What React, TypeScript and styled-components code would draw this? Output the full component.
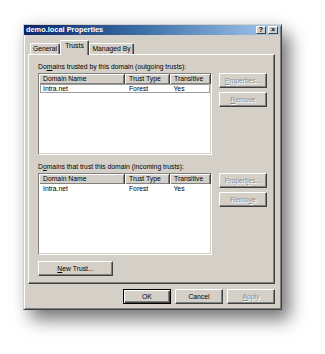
import React from "react";
import styled, { createGlobalStyle } from "styled-components";

const GlobalStyle = createGlobalStyle`
  html, body { margin: 0; padding: 0; background: #ffffff; }
  body { font-family: "Liberation Sans", Arial, sans-serif; font-size: 6.8px; color: #000; }
`;

const Page = styled.div`
  width: 325px;
  height: 354px;
  box-sizing: border-box;
  padding: 24px 0 0 23px;
  overflow: hidden;
`;

const Dialog = styled.div`
  width: 259px;
  height: 286px;
  box-sizing: border-box;
  background: #d4d0c8;
  border: 1px solid;
  border-color: #d4d0c8 #404040 #404040 #d4d0c8;
  box-shadow: inset 1px 1px #ffffff, inset -1px -1px #808080,
    8px 10px 16px rgba(0, 0, 0, 0.5), 0 0 14px rgba(0, 0, 0, 0.08);
  padding: 0 1px 0 0;
  display: flex;
  flex-direction: column;
`;

const TitleBar = styled.div`
  height: 10px;
  display: flex;
  align-items: center;
  padding: 0 2px 0 2px;
  background: linear-gradient(to right, #0a246a 0%, #3a6ea5 45%, #a6caf0 100%);
`;

const Title = styled.div`
  flex: 1;
  color: #ffffff;
  font-weight: bold;
  font-size: 7.4px;
  line-height: 10px;
  white-space: nowrap;
`;

const CaptionButton = styled.div`
  width: 10px;
  height: 8px;
  box-sizing: border-box;
  margin-left: 2px;
  background: #d4d0c8;
  border: 1px solid;
  border-color: #ffffff #404040 #404040 #ffffff;
  display: flex;
  align-items: center;
  justify-content: center;
  font-weight: bold;
  font-size: 7px;
  line-height: 6px;
  color: #000;
`;

const TabStrip = styled.div`
  margin-top: 5px;
  height: 14px;
  display: flex;
  align-items: flex-end;
  padding-left: 6px;
  position: relative;
  z-index: 1;
`;

const Tab = styled.div<{ $active?: boolean; $w: number }>`
  width: ${(p) => p.$w}px;
  height: ${(p) => (p.$active ? 15 : 11)}px;
  margin-bottom: ${(p) => (p.$active ? -1 : 0)}px;
  box-sizing: border-box;
  background: #d4d0c8;
  border-top: 1px solid #ffffff;
  border-left: 1px solid #ffffff;
  border-right: 1px solid #404040;
  box-shadow: inset -1px 0 #808080;
  border-radius: 2px 2px 0 0;
  display: flex;
  justify-content: center;
  padding-top: 1px;
  line-height: 8px;
  white-space: nowrap;
`;

const Panel = styled.div`
  margin: 0 5px 0 4px;
  height: 230px;
  box-sizing: border-box;
  border: 1px solid;
  border-color: #ffffff #404040 #404040 #ffffff;
  box-shadow: inset -1px -1px #808080;
  padding: 7px 0 0 9px;
  display: flex;
  flex-direction: column;
`;

const Label = styled.div<{ $gap?: number }>`
  height: 10px;
  line-height: 10px;
  margin-top: ${(p) => p.$gap ?? 0}px;
  margin-bottom: 1px;
  white-space: nowrap;
`;

const Key = styled.span`
  text-decoration: underline;
  text-underline-offset: 1px;
`;

const ListRow = styled.div`
  display: flex;
  gap: 7px;
  align-items: flex-start;
`;

const ListView = styled.div`
  width: 174px;
  height: 82px;
  box-sizing: border-box;
  background: #ffffff;
  border: 1px solid;
  border-color: #808080 #ffffff #ffffff #808080;
  box-shadow: inset -1px -1px #d4d0c8;
  display: flex;
  flex-direction: column;
`;

const HeaderRow = styled.div`
  display: flex;
  height: 10px;
`;

const HeaderCell = styled.div<{ $w: number }>`
  width: ${(p) => p.$w}px;
  box-sizing: border-box;
  background: #d4d0c8;
  border-right: 1px solid #404040;
  box-shadow: inset 1px 1px #ffffff, inset -1px -1px #808080;
  padding-left: 4px;
  line-height: 10px;
  white-space: nowrap;
  overflow: hidden;
`;

const DataRow = styled.div<{ $focused?: boolean }>`
  display: flex;
  height: 9px;
  box-sizing: border-box;
  margin: 0 1px;
  border: 1px solid ${(p) => (p.$focused ? "#9c9c9c" : "transparent")};
`;

const Cell = styled.div<{ $w: number; $pad: number }>`
  width: ${(p) => p.$w}px;
  box-sizing: border-box;
  padding-left: ${(p) => p.$pad}px;
  line-height: 7px;
  white-space: nowrap;
`;

const ButtonColumn = styled.div`
  display: flex;
  flex-direction: column;
  gap: 4px;
`;

const Button = styled.div<{ $disabled?: boolean; $default?: boolean }>`
  width: 48px;
  height: 15px;
  box-sizing: border-box;
  background: #d4d0c8;
  border: 1px solid;
  border-color: ${(p) =>
    p.$default ? "#000000" : "#ffffff #404040 #404040 #ffffff"};
  box-shadow: ${(p) =>
    p.$default
      ? "inset 1px 1px #ffffff, inset -1px -1px #404040, inset -2px -2px #808080"
      : "inset -1px -1px #808080"};
  display: flex;
  align-items: center;
  justify-content: center;
  line-height: 10px;
  white-space: nowrap;
  color: ${(p) => (p.$disabled ? "#8c8c8c" : "#000000")};
  text-shadow: ${(p) => (p.$disabled ? "1px 1px #ffffff" : "none")};
`;

const WideButton = styled(Button)`
  width: 75px;
  margin-top: 6px;
`;

const Footer = styled.div`
  margin: 5px 5px 0 0;
  display: flex;
  justify-content: flex-end;
  gap: 4px;
`;

type Trust = { name: string; type: string; transitive: string };

const trusts: Trust[] = [{ name: "Intra.net", type: "Forest", transitive: "Yes" }];

const TrustList: React.FC<{ focused?: boolean }> = ({ focused }) => (
  <ListView>
    <HeaderRow>
      <HeaderCell $w={86}>Domain Name</HeaderCell>
      <HeaderCell $w={45}>Trust Type</HeaderCell>
      <HeaderCell $w={41}>Transitive</HeaderCell>
    </HeaderRow>
    {trusts.map((t) => (
      <DataRow key={t.name} $focused={focused}>
        <Cell $w={85} $pad={2}>{t.name}</Cell>
        <Cell $w={45} $pad={4}>{t.type}</Cell>
        <Cell $w={40} $pad={4}>{t.transitive}</Cell>
      </DataRow>
    ))}
  </ListView>
);

export default function App() {
  return (
    <>
      <GlobalStyle />
      <Page>
        <Dialog>
          <TitleBar>
            <Title>demo.local Properties</Title>
            <CaptionButton>?</CaptionButton>
            <CaptionButton>×</CaptionButton>
          </TitleBar>
          <TabStrip>
            <Tab $w={30}>General</Tab>
            <Tab $w={29} $active>Trusts</Tab>
            <Tab $w={45}>Managed By</Tab>
          </TabStrip>
          <Panel>
            <Label>
              Do<Key>m</Key>ains trusted by this domain (outgoing trusts):
            </Label>
            <ListRow>
              <TrustList focused />
              <ButtonColumn>
                <Button $disabled><Key>P</Key>roperties...</Button>
                <Button $disabled><Key>R</Key>emove</Button>
              </ButtonColumn>
            </ListRow>
            <Label $gap={7}>
              D<Key>o</Key>mains that trust this domain (incoming trusts):
            </Label>
            <ListRow>
              <TrustList />
              <ButtonColumn>
                <Button $disabled>Propert<Key>i</Key>es...</Button>
                <Button $disabled>Remo<Key>v</Key>e</Button>
              </ButtonColumn>
            </ListRow>
            <WideButton><Key>N</Key>ew Trust...</WideButton>
          </Panel>
          <Footer>
            <Button $default>OK</Button>
            <Button>Cancel</Button>
            <Button $disabled><Key>A</Key>pply</Button>
          </Footer>
        </Dialog>
      </Page>
    </>
  );
}
